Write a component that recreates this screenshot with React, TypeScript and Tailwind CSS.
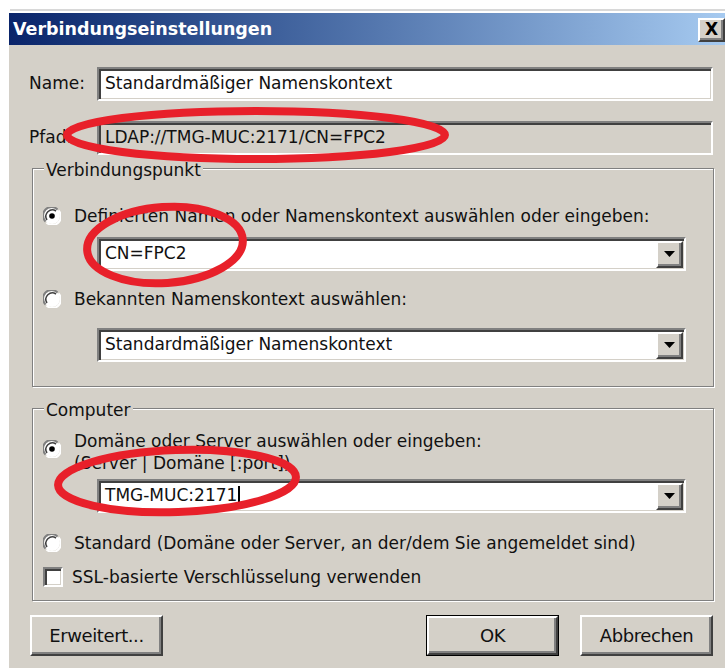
import React from "react";

const sunken =
  "border-2 border-t-[#808080] border-l-[#808080] border-b-white border-r-white shadow-[inset_2px_2px_0_#404040,inset_-1px_-1px_0_#d4d0c8]";
const raised =
  "border-2 border-t-white border-l-white border-b-[#404040] border-r-[#404040] shadow-[inset_-2px_-2px_0_#808080]";

const Radio = ({ checked }: { checked?: boolean }) => (
  <svg width="18" height="18" viewBox="0 0 18 18" className="shrink-0">
    <circle cx="9" cy="9" r="8" fill="#fff" />
    <path d="M2.5 14.5 A8 8 0 0 1 14.5 2.5" stroke="#808080" strokeWidth="2" fill="none" />
    <path d="M4 13 A6.5 6.5 0 0 1 13 4" stroke="#404040" strokeWidth="1.5" fill="none" />
    <path d="M15.5 3.5 A8 8 0 0 1 3.5 15.5" stroke="#ffffff" strokeWidth="2" fill="none" />
    {checked && <circle cx="9" cy="9" r="2.8" fill="#000" />}
  </svg>
);

const Combo = ({ value, caret }: { value: string; caret?: boolean }) => (
  <div className={`ml-[64px] w-[589px] h-[34px] bg-white flex items-center ${sunken}`}>
    <span className="flex-1 pl-[6px] flex items-center">
      {value}
      {caret && <span className="inline-block w-[1.5px] h-[20px] bg-black ml-[1px]" />}
    </span>
    <div className={`w-[27px] h-[27px] mr-[1px] bg-[#d4d0c8] flex items-center justify-center ${raised}`}>
      <svg width="11" height="6" viewBox="0 0 11 6">
        <path d="M0 0 H11 L5.5 6 Z" fill="#000" />
      </svg>
    </div>
  </div>
);

const Group = ({ title, className, children }: { title: string; className?: string; children: React.ReactNode }) => (
  <div
    className={`ml-[10px] w-[682px] border border-[#808080] shadow-[1px_1px_0_#fff,inset_1px_1px_0_#fff] ${className ?? ""}`}
  >
    <div className="-mt-[9px] ml-[11px] w-fit bg-[#d4d0c8] px-[2px] leading-[20px]">{title}</div>
    {children}
  </div>
);

const Button = ({ label, isDefault, className }: { label: string; isDefault?: boolean; className?: string }) => (
  <div className={`${isDefault ? "border border-black" : ""} ${className ?? ""}`}>
    <div className={`h-full bg-[#d4d0c8] flex items-center justify-center text-[18px] tracking-[-0.4px] ${raised}`}>
      {label}
    </div>
  </div>
);

export default function App() {
  return (
    <div className="relative w-[725px] h-[668px] bg-white overflow-hidden text-[17px] text-[#111] font-['DejaVu_Sans',sans-serif]">
      <div className="h-[13px] pt-[9px] pl-[10px]">
        <div className="h-[2px] bg-[#d8d8d8]" />
      </div>

      <div className="ml-[9px]">
        {/* title bar */}
        <div className="h-[32px] flex items-center bg-gradient-to-r from-[#0a246a] to-[#a6caf0]">
          <span className="pl-[4px] text-white font-bold text-[17.5px] flex-1">Verbindungseinstellungen</span>
          <div className={`w-[27px] h-[24px] mt-[2px] bg-[#d4d0c8] flex items-center justify-center font-bold text-[17px] text-black ${raised}`}>
            X
          </div>
        </div>

        {/* dialog body */}
        <div className="h-[623px] bg-[#d4d0c8] pl-[13px] pr-[12px] pt-[22px]">
          <div className="flex items-center">
            <span className="ml-[7px] w-[68px]">Name:</span>
            <div className={`flex-1 h-[34px] bg-white flex items-center pl-[6px] ${sunken}`}>
              Standardmäßiger Namenskontext
            </div>
          </div>
          <div className="flex items-center mt-[20px]">
            <span className="ml-[7px] w-[68px]">Pfad:</span>
            <div className={`flex-1 h-[34px] bg-[#d4d0c8] flex items-center pl-[6px] ${sunken}`}>
              LDAP://TMG-MUC:2171/CN=FPC2
            </div>
          </div>

          <Group title="Verbindungspunkt" className="mt-[13px] pb-[24px]">
            <div className="mt-[26px] ml-[10px] flex items-center gap-[13px] leading-[20px]">
              <Radio checked />
              <span>Definierten Namen oder Namenskontext auswählen oder eingeben:</span>
            </div>
            <div className="mt-[11px]">
              <Combo value="CN=FPC2" />
            </div>
            <div className="mt-[18px] ml-[10px] flex items-center gap-[13px] leading-[20px]">
              <Radio />
              <span>Bekannten Namenskontext auswählen:</span>
            </div>
            <div className="mt-[19px]">
              <Combo value="Standardmäßiger Namenskontext" />
            </div>
          </Group>

          <Group title="Computer" className="mt-[21px] pb-[13px]">
            <div className="mt-[10px] ml-[10px] flex items-start gap-[13px] leading-[22px]">
              <div className="mt-[10px]">
                <Radio checked />
              </div>
              <div>
                <div>Domäne oder Server auswählen oder eingeben:</div>
                <div>(Server | Domäne [:port])</div>
              </div>
            </div>
            <div className="mt-[5px]">
              <Combo value="TMG-MUC:2171" caret />
            </div>
            <div className="mt-[20px] ml-[10px] flex items-center gap-[13px] leading-[20px]">
              <Radio />
              <span>Standard (Domäne oder Server, an der/dem Sie angemeldet sind)</span>
            </div>
            <div className="mt-[14px] ml-[10px] flex items-center gap-[9px] leading-[20px]">
              <div className={`w-[20px] h-[20px] bg-white ${sunken}`} />
              <span>SSL-basierte Verschlüsselung verwenden</span>
            </div>
          </Group>

          <div className="mt-[14px] flex h-[41px] pl-[8px]">
            <Button label="Erweitert..." className="w-[133px]" />
            <Button label="OK" isDefault className="ml-auto w-[133px]" />
            <Button label="Abbrechen" className="ml-[21px] w-[133px]" />
          </div>
        </div>
      </div>

      {/* red marker ellipses drawn over the dialog */}
      <svg className="absolute inset-0 pointer-events-none" width="725" height="668" viewBox="0 0 725 668">
        <g fill="none" stroke="#e8202a" strokeWidth="8">
          <ellipse cx="256" cy="135" rx="189" ry="24" />
          <ellipse cx="165" cy="245" rx="78" ry="38" transform="rotate(-4 165 245)" />
          <ellipse cx="177" cy="481" rx="119" ry="31" transform="rotate(-2 177 481)" />
        </g>
      </svg>
    </div>
  );
}
